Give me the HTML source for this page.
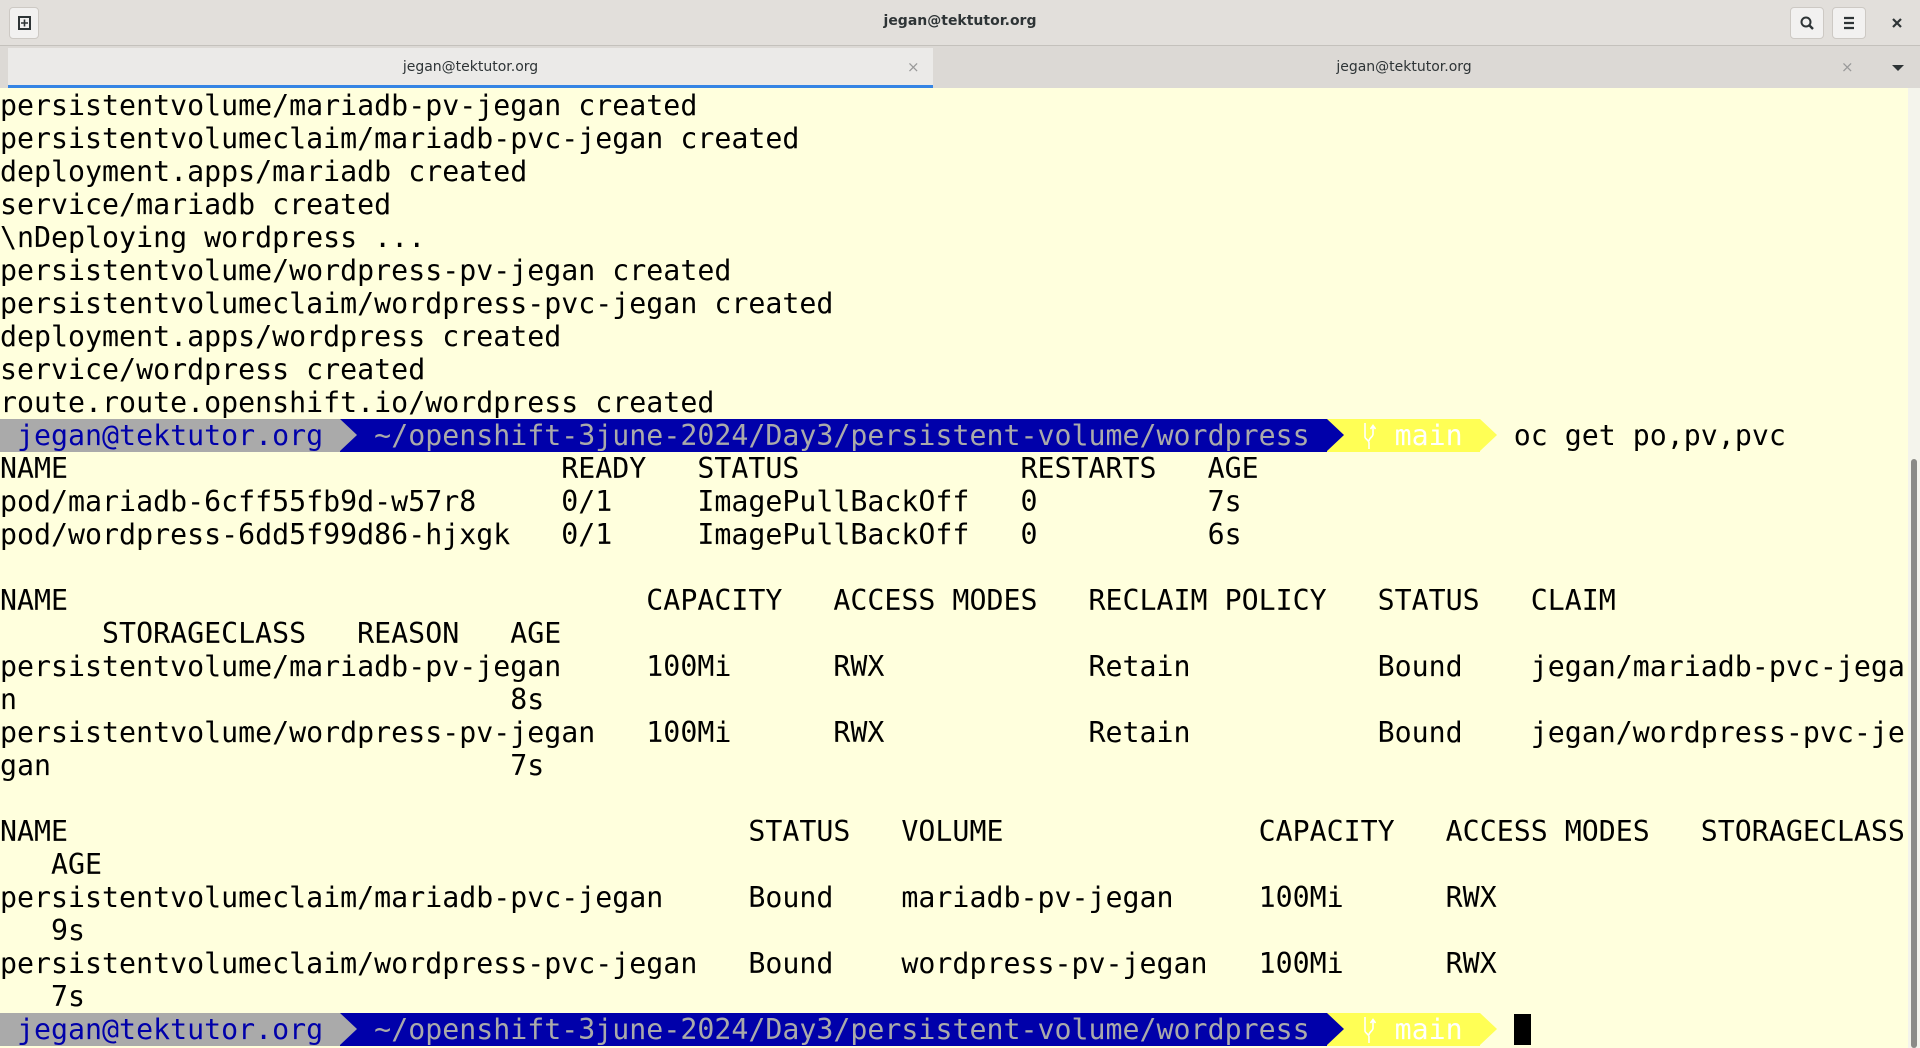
<!DOCTYPE html>
<html><head><meta charset="utf-8"><style>
*{margin:0;padding:0;box-sizing:border-box}
body{width:1920px;height:1048px;overflow:hidden;background:#ffffdd;position:relative;font-family:"DejaVu Sans Mono","Liberation Mono",monospace}
#title{position:absolute;left:0;top:0;width:1920px;height:46px;background:#e2dfdb;border-bottom:1px solid #c4c1bc;font-family:"DejaVu Sans","Liberation Sans",sans-serif}
#title .t{position:absolute;left:0;width:1920px;top:13px;text-align:center;font-size:14px;font-weight:bold;color:#2e3436}
.btn{position:absolute;top:7px;width:34px;height:32px;background:#f2f1f0;border:1px solid #cdc9c4;border-radius:4px}
#tabs{position:absolute;left:0;top:46px;width:1920px;height:42px;background:#dcd9d5;font-family:"DejaVu Sans","Liberation Sans",sans-serif;font-size:14px;color:#2e3436}
.tab{position:absolute;top:2px;height:40px;text-align:center;line-height:38px}
.tab .x{position:absolute;top:0;color:#999;font-size:15px}
#term{position:absolute;left:0;top:89px;width:1908px;font-size:28.25px;color:#000}
.r{position:relative;height:33px;line-height:33px;white-space:pre}
.r i{position:absolute;top:0;font-style:normal}
.pr{display:flex;height:33px;line-height:33px;white-space:pre}
.g{background:#aaaaaa;color:#0000aa}
.b{background:#0000aa;color:#aaaaaa}
.y{background:#ffff55;color:#fff}
.sep{display:inline-block;width:1ch;height:33px;position:relative}
.sep:after{content:"";position:absolute;left:0;top:0;border-top:16.5px solid transparent;border-bottom:16.5px solid transparent;border-left:17px solid var(--c)}
#sb{position:absolute;left:1908px;top:88px;width:12px;height:960px;background:#f4f4ec}
#sb div{position:absolute;left:3px;top:371px;width:6px;height:589px;background:#8b8b87;border-radius:3px}
</style></head><body>
<div id="title">
 <div class="btn" style="left:9px;width:30px;"><svg width="30" height="30" viewBox="0 0 30 30"><rect x="9" y="9" width="11" height="12" fill="none" stroke="#2e3436" stroke-width="2"/><path d="M14.5 11.5v7M11 15h7" stroke="#2e3436" stroke-width="1.6"/></svg></div>
 <div class="t">jegan@tektutor.org</div>
 <div class="btn" style="left:1790px"><svg width="32" height="30" viewBox="0 0 32 30"><circle cx="15" cy="14" r="4.5" fill="none" stroke="#2e3436" stroke-width="2"/><path d="M18 17l4 4" stroke="#2e3436" stroke-width="2.4"/></svg></div>
 <div class="btn" style="left:1832px"><svg width="32" height="30" viewBox="0 0 32 30"><path d="M11 10h10M11 15h10M11 20h10" stroke="#2e3436" stroke-width="2.2"/></svg></div>
 <svg style="position:absolute;left:1888px;top:14px" width="18" height="18" viewBox="0 0 18 18"><path d="M5 5l8 8M13 5l-8 8" stroke="#2e3436" stroke-width="2.2"/></svg>
</div>
<div id="tabs">
 <div class="tab" style="left:8px;width:925px;background:#ebeae8;border-bottom:3px solid #3584e4">jegan@tektutor.org<span class="x" style="left:899px">×</span></div>
 <div class="tab" style="left:935px;width:938px">jegan@tektutor.org<span class="x" style="left:906px">×</span></div>
 <svg style="position:absolute;left:1890px;top:17px" width="16" height="10" viewBox="0 0 16 10"><path d="M2 2h12l-6 6z" fill="#2e3436"/></svg>
</div>
<div id="term">
<div class="r">persistentvolume/mariadb-pv-jegan created</div>
<div class="r">persistentvolumeclaim/mariadb-pvc-jegan created</div>
<div class="r">deployment.apps/mariadb created</div>
<div class="r">service/mariadb created</div>
<div class="r">\nDeploying wordpress ...</div>
<div class="r">persistentvolume/wordpress-pv-jegan created</div>
<div class="r">persistentvolumeclaim/wordpress-pvc-jegan created</div>
<div class="r">deployment.apps/wordpress created</div>
<div class="r">service/wordpress created</div>
<div class="r">route.route.openshift.io/wordpress created</div>
<div class="pr"><span class="g"> jegan@tektutor.org </span><span class="sep b" style="--c:#aaaaaa"></span><span class="b"> ~/openshift-3june-2024/Day3/persistent-volume/wordpress </span><span class="sep y" style="--c:#0000aa"></span><span class="y"> <svg width="17" height="30" viewBox="0 0 17 30" style="vertical-align:-6px"><path d="M4 2v14c0 2 4 3 4 6v6M8 20c0-3 4-4 4-7V5M9.5 8L12 4.5 14.5 8" fill="none" stroke="#fff" stroke-width="1.6"/></svg> main </span><span class="sep" style="--c:#ffff55"></span><span> oc get po,pv,pvc</span></div>
<div class="r">NAME<i style="left:33ch">READY</i><i style="left:41ch">STATUS</i><i style="left:60ch">RESTARTS</i><i style="left:71ch">AGE</i></div>
<div class="r">pod/mariadb-6cff55fb9d-w57r8<i style="left:33ch">0/1</i><i style="left:41ch">ImagePullBackOff</i><i style="left:60ch">0</i><i style="left:71ch">7s</i></div>
<div class="r">pod/wordpress-6dd5f99d86-hjxgk<i style="left:33ch">0/1</i><i style="left:41ch">ImagePullBackOff</i><i style="left:60ch">0</i><i style="left:71ch">6s</i></div>
<div class="r"> </div>
<div class="r">NAME<i style="left:38ch">CAPACITY</i><i style="left:49ch">ACCESS MODES</i><i style="left:64ch">RECLAIM POLICY</i><i style="left:81ch">STATUS</i><i style="left:90ch">CLAIM</i></div>
<div class="r"><i style="left:6ch">STORAGECLASS</i><i style="left:21ch">REASON</i><i style="left:30ch">AGE</i></div>
<div class="r">persistentvolume/mariadb-pv-jegan<i style="left:38ch">100Mi</i><i style="left:49ch">RWX</i><i style="left:64ch">Retain</i><i style="left:81ch">Bound</i><i style="left:90ch">jegan/mariadb-pvc-jega</i></div>
<div class="r">n<i style="left:30ch">8s</i></div>
<div class="r">persistentvolume/wordpress-pv-jegan<i style="left:38ch">100Mi</i><i style="left:49ch">RWX</i><i style="left:64ch">Retain</i><i style="left:81ch">Bound</i><i style="left:90ch">jegan/wordpress-pvc-je</i></div>
<div class="r">gan<i style="left:30ch">7s</i></div>
<div class="r"> </div>
<div class="r">NAME<i style="left:44ch">STATUS</i><i style="left:53ch">VOLUME</i><i style="left:74ch">CAPACITY</i><i style="left:85ch">ACCESS MODES</i><i style="left:100ch">STORAGECLASS</i></div>
<div class="r">   AGE</div>
<div class="r">persistentvolumeclaim/mariadb-pvc-jegan<i style="left:44ch">Bound</i><i style="left:53ch">mariadb-pv-jegan</i><i style="left:74ch">100Mi</i><i style="left:85ch">RWX</i></div>
<div class="r">   9s</div>
<div class="r">persistentvolumeclaim/wordpress-pvc-jegan<i style="left:44ch">Bound</i><i style="left:53ch">wordpress-pv-jegan</i><i style="left:74ch">100Mi</i><i style="left:85ch">RWX</i></div>
<div class="r">   7s</div>
<div class="pr"><span class="g"> jegan@tektutor.org </span><span class="sep b" style="--c:#aaaaaa"></span><span class="b"> ~/openshift-3june-2024/Day3/persistent-volume/wordpress </span><span class="sep y" style="--c:#0000aa"></span><span class="y"> <svg width="17" height="30" viewBox="0 0 17 30" style="vertical-align:-6px"><path d="M4 2v14c0 2 4 3 4 6v6M8 20c0-3 4-4 4-7V5M9.5 8L12 4.5 14.5 8" fill="none" stroke="#fff" stroke-width="1.6"/></svg> main </span><span class="sep" style="--c:#ffff55"></span><span> </span><span style="display:inline-block;width:1ch;height:31px;margin-top:1px;background:#000"></span></div>
</div>
<div id="sb"><div></div></div>
</body></html>
